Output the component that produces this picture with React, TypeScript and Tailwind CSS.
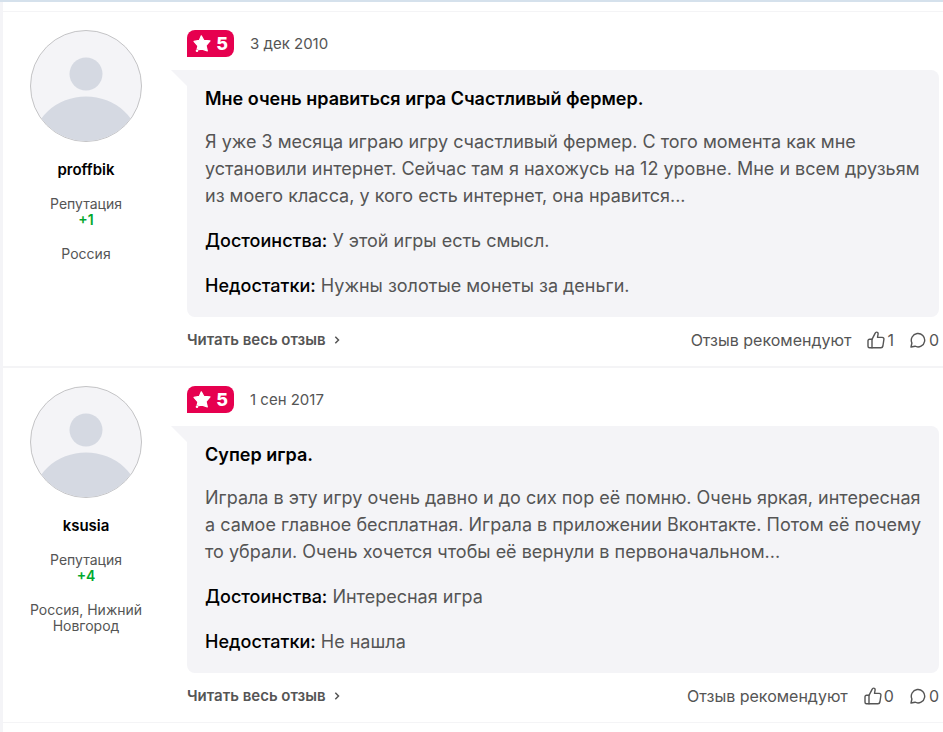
import React from 'react';

type Review = {
    id: number;
    author: string;
    reputation: string;
    location: string;
    rating: number;
    date: string;
    title: string;
    text: string[];
    pros: string;
    cons: string;
    likes: number;
    comments: number;
};

const reviews: Review[] = [
    {
        id: 1,
        author: 'proffbik',
        reputation: '+1',
        location: 'Россия',
        rating: 5,
        date: '3 дек 2010',
        title: 'Мне очень нравиться игра Счастливый фермер.',
        text: [
            'Я уже 3 месяца играю игру счастливый фермер. С того момента как мне',
            'установили интернет. Сейчас там я нахожусь на 12 уровне. Мне и всем друзьям',
            'из моего класса, у кого есть интернет, она нравится...',
        ],
        pros: 'У этой игры есть смысл.',
        cons: 'Нужны золотые монеты за деньги.',
        likes: 1,
        comments: 0,
    },
    {
        id: 2,
        author: 'ksusia',
        reputation: '+4',
        location: 'Россия, Нижний Новгород',
        rating: 5,
        date: '1 сен 2017',
        title: 'Супер игра.',
        text: [
            'Играла в эту игру очень давно и до сих пор её помню. Очень яркая, интересная',
            'а самое главное бесплатная. Играла в приложении Вконтакте. Потом её почему',
            'то убрали. Очень хочется чтобы её вернули в первоначальном...',
        ],
        pros: 'Интересная игра',
        cons: 'Не нашла',
        likes: 0,
        comments: 0,
    },
];

// --- ICONS ---

const StarIcon = () => (
    <svg className="h-[18px] w-[18px]" viewBox="0 0 18 18" fill="#fff" stroke="#fff" strokeWidth="1.2" strokeLinejoin="round" aria-hidden="true">
        <path d="M8.300.800 10.800 5.400l6.200.5-4 4.600 1.300 5.400-5.100-1.800-3.500.6.300-1.200-1.800.300.700-3L1 6.400l5.300-1z" />
        <circle cx="4" cy="15.800" r="1.300" stroke="none" />
    </svg>
);

const LikeIcon = () => (
    <svg className="h-[18px] w-[18px]" viewBox="0 0 18 18" fill="none" stroke="currentColor" strokeWidth="1.4" strokeLinejoin="round" strokeLinecap="round" aria-hidden="true">
        <path d="M5 8.300 8.200 2.200C8.500 1.400 9 1 9.700 1.100c1 .1 1.500.9 1.400 1.900L10.500 6.400h4.700c1.200 0 1.900.9 1.700 2l-1 6.600c-.2 1-.9 1.700-1.900 1.700H5z" />
        <path d="M5 8.300H2.500c-.9 0-1.500.6-1.500 1.500v5.400c0 .9.6 1.500 1.500 1.500H5" />
    </svg>
);

const CommentIcon = () => (
    <svg className="h-4 w-4" viewBox="0 0 16 16" fill="none" stroke="currentColor" strokeWidth="1.4" strokeLinejoin="round" aria-hidden="true">
        <path d="M1 15l.9-4A6.700 6.700 0 1 1 5 14.200z" />
    </svg>
);

const ChevronIcon = () => (
    <svg className="h-2 w-[6px]" viewBox="0 0 6 8" fill="none" stroke="currentColor" strokeWidth="1.500" aria-hidden="true">
        <path d="M1.300.800 4.500 4 1.300 7.200" />
    </svg>
);

const Avatar = () => (
    <svg className="h-28 w-28 overflow-hidden rounded-full border border-[#c4c4c6] bg-[#f4f4f7]" viewBox="0 0 110 110" aria-hidden="true">
        <circle cx="55" cy="43" r="16.500" fill="#d5d9e2" />
        <ellipse cx="55" cy="115.500" rx="54" ry="50" fill="#d5d9e2" />
    </svg>
);

// --- REVIEW ---

const ReviewCard = ({ review }: { review: Review }) => (
    <article className="flex gap-[29px] pl-[11px] pr-1 pt-[18px]">
        <aside className="flex w-36 shrink-0 flex-col items-center text-center text-[14px] leading-4 text-[#555]">
            <a href="#profile" aria-label={review.author}>
                <Avatar />
            </a>
            <a href="#profile" className="mt-[18px] text-[15px] leading-5 font-semibold text-black">{review.author}</a>
            <div className="mt-4">Репутация</div>
            <div className="font-semibold text-[#00a82d]">{review.reputation}</div>
            <div className="mt-[18px] w-[120px]">{review.location}</div>
        </aside>

        <div className="min-w-0 grow">
            <div className="flex items-center gap-4">
                <div className="flex h-[27px] w-[47px] items-center justify-between rounded-lg rounded-bl-none bg-[#e6004f] px-[6px] text-[18px] font-extrabold text-white">
                    <StarIcon />
                    <span>{review.rating}</span>
                </div>
                <time className="text-[15px] leading-5 text-[#555]">{review.date}</time>
            </div>

            <div className="relative mt-[13px] rounded-lg rounded-tl-none bg-[#f4f4f7] px-[18px] pt-[15px] pb-[18px] text-[18px] leading-[27px] text-[#555]">
                {/* Tail of the bubble */}
                <div className="absolute top-0 -left-4 h-4 w-4 bg-[#f4f4f7] [clip-path:polygon(0_0,100%_0,100%_100%)]" />
                <h2 className="font-semibold text-black">{review.title}</h2>
                <p className="mt-4">
                    {review.text.map((line) => (
                        <span key={line} className="block whitespace-nowrap">{line}</span>
                    ))}
                </p>
                <p className="mt-[18px]"><b className="font-medium text-black">Достоинства:</b> {review.pros}</p>
                <p className="mt-[18px]"><b className="font-medium text-black">Недостатки:</b> {review.cons}</p>
            </div>

            <footer className="flex h-[49px] items-start justify-between pt-[13px] text-[15px] leading-5 text-[#555]">
                <a href="#review" className="flex items-center gap-2 font-semibold">
                    Читать весь отзыв
                    <ChevronIcon />
                </a>
                <div className="flex items-center text-[16px]">
                    <span>Отзыв рекомендуют</span>
                    <button type="button" className="ml-4 flex items-center gap-[2px]" aria-label="Рекомендую">
                        <LikeIcon />
                        {review.likes}
                    </button>
                    <a href="#comments" className="ml-4 flex items-center gap-[3px]" aria-label="Комментарии">
                        <CommentIcon />
                        {review.comments}
                    </a>
                </div>
            </footer>
        </div>
    </article>
);

export default function App() {
    return (
        <main className="min-h-screen border-t-2 border-[#d5e1ec] bg-white font-[Inter,'Noto_Sans',sans-serif]">
            <div className="min-h-[730px] border-l-[3px] border-[#f4f4f7] pt-[9px]">
                <div className="divide-y-2 divide-[#f4f4f6] border-y border-[#f4f4f6]">
                    {reviews.map((review) => (
                        <ReviewCard key={review.id} review={review} />
                    ))}
                </div>
            </div>
        </main>
    );
}
